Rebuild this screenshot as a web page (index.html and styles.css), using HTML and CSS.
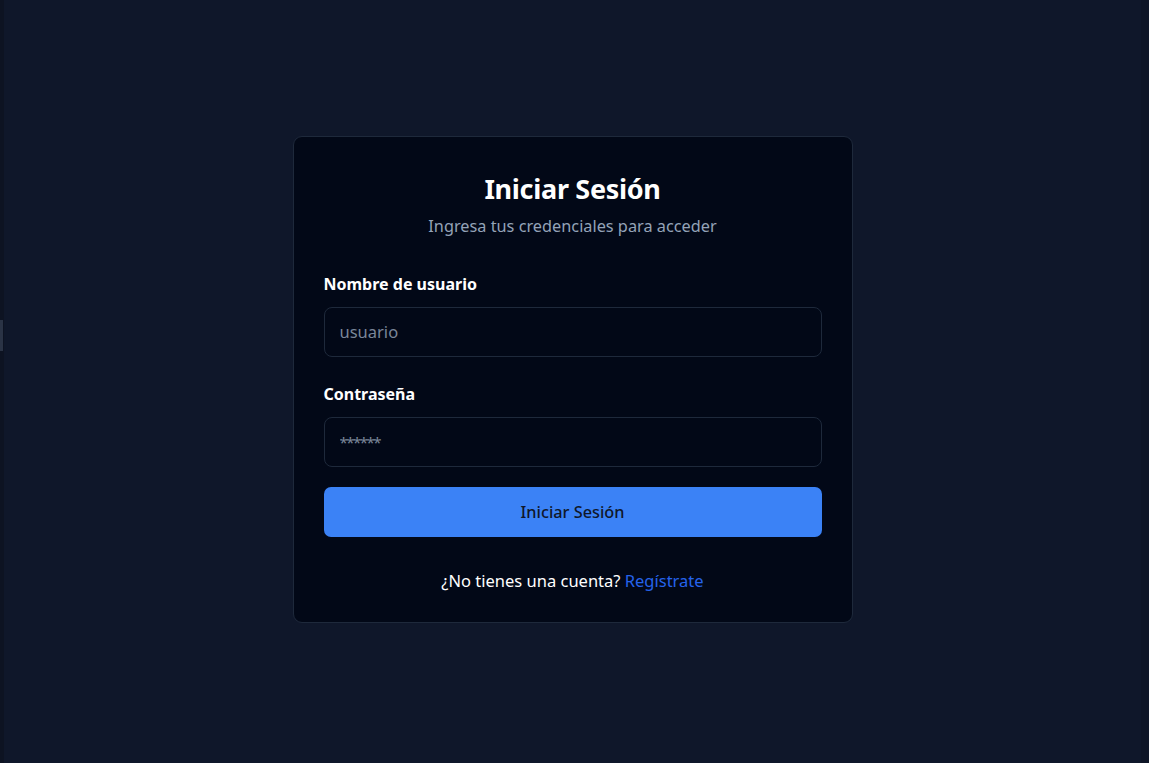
FILE: index.html
```html
<!DOCTYPE html>
<html lang="es">
<head>
<meta charset="utf-8">
<title>Iniciar Sesión</title>
<link rel="stylesheet" href="styles.css">
</head>
<body>
<div class="edge-left"><span class="edge-handle"></span></div>
<main class="page">
  <section class="card">
    <header class="card-head">
      <h1 class="title">Iniciar Sesión</h1>
      <p class="subtitle">Ingresa tus credenciales para acceder</p>
    </header>
    <form class="form">
      <div class="field">
        <label class="label" for="u">Nombre de usuario</label>
        <input class="input" id="u" type="text" placeholder="usuario">
      </div>
      <div class="field">
        <label class="label" for="p">Contraseña</label>
        <input class="input pw" id="p" type="text" placeholder="******">
      </div>
      <button class="btn" type="button">Iniciar Sesión</button>
    </form>
    <p class="footer">¿No tienes una cuenta? <a class="link" href="#">Regístrate</a></p>
  </section>
</main>
<div class="edge-right"></div>
</body>
</html>
```
FILE: styles.css
```css
* { box-sizing: border-box; }
html, body { margin: 0; padding: 0; }
body {
  background: #0f172a;
  font-family: "Noto Sans", "Open Sans", sans-serif;
  color: #f8fafc;
  height: 100vh;
  display: flex;
  overflow: hidden;
}
.edge-left {
  position: relative;
  flex: 0 0 4px;
  background: #0d1322;
}
.edge-handle {
  position: absolute;
  left: 0; top: 320px;
  width: 3px; height: 31px;
  background: #2a3345;
}
.edge-right {
  flex: 0 0 8px;
  background: #0e1526;
}
.page {
  flex: 1;
  display: flex;
  align-items: center;
  justify-content: center;
  padding-bottom: 5px;
}
.card {
  width: 560px;
  background: #020817;
  border: 1px solid #1e293b;
  border-radius: 9px;
  padding: 30px 30px 29px;
}
.card-head { text-align: center; }
.title {
  margin: 0;
  font-size: 27px;
  line-height: 44px;
  font-weight: 700;
  color: #ffffff;
  letter-spacing: -0.3px;
}
.subtitle {
  margin: 3px 0 0;
  font-size: 16.3px;
  line-height: 24px;
  color: #94a3b8;
}
.form {
  margin-top: 34px;
  display: flex;
  flex-direction: column;
}
.field { display: flex; flex-direction: column; gap: 11px; margin-bottom: 25px; }
.field + .field { margin-bottom: 20px; }
.label {
  font-size: 16px;
  line-height: 24px;
  font-weight: 700;
  color: #ffffff;
}
.input {
  height: 50px;
  background: #020817;
  border: 1px solid #1e293b;
  border-radius: 8px;
  padding: 0 15px;
  font-family: inherit;
  font-size: 16.5px;
  color: #f8fafc;
  outline: none;
}
.input::placeholder { color: #7a8699; }
.pw::placeholder { letter-spacing: -1.5px; font-size: 15px; }
.btn {
  height: 50px;
  border: none;
  border-radius: 7px;
  background: #3b82f6;
  color: #0f172a;
  font-family: inherit;
  font-size: 16.3px;
  font-weight: 500;
}
.footer {
  margin: 32px 0 0;
  text-align: center;
  font-size: 16.5px;
  line-height: 24px;
  color: #ffffff;
}
.link { color: #2563eb; text-decoration: none; }
```
